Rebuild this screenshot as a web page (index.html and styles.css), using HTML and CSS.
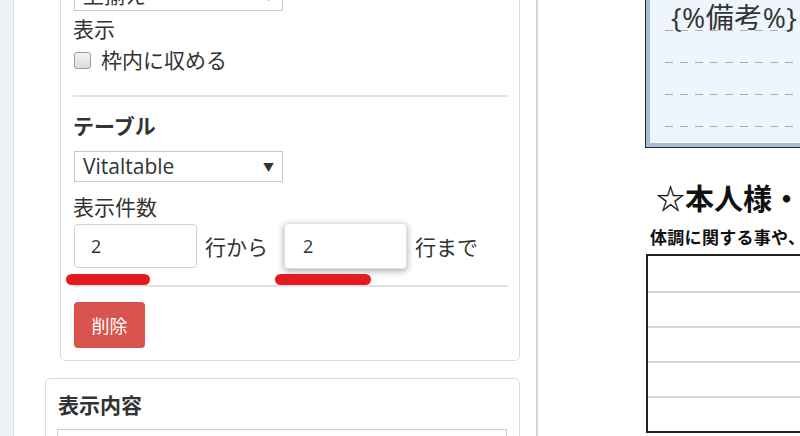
FILE: index.html
```html
<!DOCTYPE html>
<html lang="ja">
<head>
    <meta charset="UTF-8">
    <meta name="viewport" content="width=device-width, initial-scale=1.0">
    <title>帳票レイアウト編集</title>
    <link rel="stylesheet" href="styles.css">
</head>
<body>
    <div class="sidebar"></div>

    <div class="panel">
        <div class="panel-inner">
            <div class="card card-item">
                <div class="select">上揃え<span class="caret">▼</span></div>
                <div class="label label-show">表示</div>
                <label class="check-row">
                    <span class="checkbox"></span>
                    <span>枠内に収める</span>
                </label>

                <hr class="rule rule-top">

                <h3 class="heading">テーブル</h3>
                <div class="select select-table">Vitaltable<span class="caret">▼</span></div>
                <div class="label label-count">表示件数</div>
                <div class="range-row">
                    <div class="field">
                        <input type="text" class="num-input" value="2">
                        <span class="mark mark-from"></span>
                    </div>
                    <span class="range-text">行から</span>
                    <div class="field">
                        <input type="text" class="num-input is-focus" value="2">
                        <span class="mark mark-to"></span>
                    </div>
                    <span class="range-text">行まで</span>
                </div>

                <hr class="rule rule-bottom">

                <button class="btn-delete" type="button">削除</button>
            </div>

            <div class="card card-content">
                <h3 class="heading">表示内容</h3>
                <div class="content-box"></div>
            </div>
        </div>
    </div>

    <div class="preview">
        <div class="memo">
            <div class="memo-line"><span class="memo-tag">{%備考%}</span></div>
            <div class="memo-line"></div>
            <div class="memo-line"></div>
            <div class="memo-line"></div>
        </div>

        <h2 class="doc-title">☆本人様・</h2>
        <p class="doc-sub">体調に関する事や、</p>

        <div class="doc-table">
            <div class="doc-row"></div>
            <div class="doc-row"></div>
            <div class="doc-row"></div>
            <div class="doc-row"></div>
            <div class="doc-row"></div>
        </div>
    </div>
</body>
</html>
```

FILE: styles.css
```css
body {
    margin: 0;
    height: 436px;
    overflow: hidden;
    display: flex;
    font-family: "Open Sans", "Noto Sans CJK JP", sans-serif;
    color: #333;
    background-color: #fff;
}

/* left strip */
.sidebar {
    width: 13px;
    flex-shrink: 0;
    background-color: #eef2f8;
    border-right: 1px solid #dde0e5;
}

/* settings panel */
.panel {
    width: 522px;
    flex-shrink: 0;
    border-right: 2px solid #d6d6d6;
}
.panel-inner {
    margin-top: -20px;
    padding: 0 16px 0 31px;
}
.card {
    border: 1px solid #dcdcdc;
    border-radius: 5px;
    background-color: #fff;
}
.card-item {
    margin-left: 15px;
    padding: 0 11px 12px 12px;
    border-top: none;
    border-top-left-radius: 0;
    border-top-right-radius: 0;
}
.card-content {
    margin-top: 17px;
    padding: 14px 12px 0 12px;
    height: 80px;
}

.select {
    position: relative;
    box-sizing: border-box;
    width: 209px;
    height: 31px;
    margin-left: 1px;
    padding: 0 8px;
    border: 1px solid #c8c8c8;
    font-size: 21px;
    line-height: 29px;
}
.caret {
    position: absolute;
    right: 8px;
    top: 1px;
    font-size: 11px;
}
.select-table {
    margin-top: 13px;
}

.label {
    font-size: 21px;
    line-height: 24px;
}
.label-show {
    margin-top: 6px;
}
.label-count {
    margin-top: 13px;
}

.check-row {
    display: flex;
    align-items: center;
    margin-top: 7px;
    font-size: 21px;
    line-height: 24px;
}
.checkbox {
    width: 15px;
    height: 15px;
    margin: 0 10px 0 1px;
    border: 1px solid #9a9a9a;
    border-radius: 3px;
    background: linear-gradient(#f4f4f4, #dcdcdc);
}

.rule {
    height: 0;
    margin: 0;
    border: none;
    border-top: 2px solid #e2e2e2;
}
.rule-top {
    margin-top: 23px;
}
.rule-bottom {
    margin-top: 17px;
}

.heading {
    margin: 17px 0 0;
    font-size: 21px;
    line-height: 24px;
    font-weight: bold;
}
.card-content .heading {
    margin-top: 0;
}

.range-row {
    display: flex;
    align-items: center;
    margin-top: 5px;
    height: 44px;
}
.field {
    position: relative;
}
.num-input {
    display: block;
    box-sizing: border-box;
    width: 123px;
    height: 44px;
    margin-left: 1px;
    padding: 0 16px;
    border: 1px solid #d0d0d0;
    border-radius: 4px;
    font-family: "Open Sans", sans-serif;
    font-size: 18px;
    color: #333;
    outline: none;
}
.num-input.is-focus {
    height: 46px;
    margin-left: 0;
    padding-left: 18px;
    border-color: #e0e0e0;
    box-shadow: 0 2px 7px rgba(0, 0, 0, 0.35);
}
.range-text {
    margin: 0 16px 0 8px;
    font-size: 21px;
}

/* red annotation marks under the inputs */
.mark {
    position: absolute;
    top: 50px;
    height: 11px;
    border-radius: 6px;
    background-color: #e21b1f;
}
.mark-from {
    left: -7px;
    width: 84px;
}
.mark-to {
    left: -9px;
    width: 96px;
    top: 51px;
}

.btn-delete {
    display: block;
    width: 71px;
    height: 46px;
    margin: 15px 0 0 1px;
    border: none;
    border-radius: 4px;
    background-color: #d9534f;
    color: #fff;
    font-family: "Noto Sans CJK JP", sans-serif;
    font-size: 18px;
}

.content-box {
    height: 40px;
    margin: 12px 0 0 -1px;
    border: 1px solid #cfcfcf;
}

/* form preview on the right */
.preview {
    flex: 1;
    min-width: 0;
    overflow: hidden;
    padding-left: 107px;
    font-family: "Noto Sans CJK JP", sans-serif;
    color: #111;
}
.memo {
    width: 300px;
    margin-top: -20px;
    padding: 18px 0 0 19px;
    height: 168px;
    box-sizing: border-box;
    border: 1px solid #2a2a2a;
    box-shadow: inset 0 0 0 4px #a9bcd5;
    background-color: #eef5fc;
}
.memo-line {
    height: 32px;
    background-image: repeating-linear-gradient(to right, #a3afbb 0 8px, transparent 8px 15px);
    background-size: 100% 1px;
    background-repeat: no-repeat;
    background-position: 0 31px;
}
.memo-tag {
    display: inline-block;
    margin-left: 6px;
    padding-top: 2px;
    font-family: "Open Sans", "Noto Sans CJK JP", sans-serif;
    font-size: 28px;
    letter-spacing: 0.5px;
    line-height: 32px;
    color: #333;
}

.doc-title {
    margin: 33px 0 0 11px;
    font-size: 29px;
    line-height: 32px;
    font-weight: bold;
    white-space: nowrap;
}
.doc-sub {
    margin: 14px 0 0 5px;
    font-size: 17px;
    line-height: 20px;
    letter-spacing: 0.3px;
    font-weight: bold;
    white-space: nowrap;
}
.doc-table {
    width: 300px;
    margin: 7px 0 0 1px;
    border: 2px solid #222;
}
.doc-row {
    height: 33px;
    border-top: 2px solid #d6d6d6;
}
.doc-row:first-child {
    height: 35px;
    border-top: none;
}
```
